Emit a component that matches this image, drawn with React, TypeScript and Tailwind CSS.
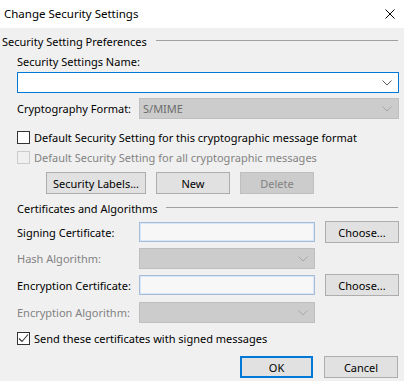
import type { ReactNode } from "react";

const font = { fontFamily: '"Noto Sans", "Open Sans", sans-serif' };

function Chevron({ color }: { color: string }) {
  return (
    <svg width="10" height="6" viewBox="0 0 10 6" className="shrink-0">
      <path d="M0.5 0.5 L5 5 L9.5 0.5" fill="none" stroke={color} strokeWidth="1" />
    </svg>
  );
}

function Checkbox({ checked, disabled }: { checked?: boolean; disabled?: boolean }) {
  return (
    <span
      className={
        "flex h-[13px] w-[13px] shrink-0 items-center justify-center border " +
        (disabled ? "border-[#cccccc] bg-[#f0f0f0]" : "border-[#333333] bg-white")
      }
    >
      {checked && (
        <svg width="11" height="11" viewBox="0 0 11 11">
          <path d="M1 5.5 L4 8.5 L10 1.5" fill="none" stroke="#333333" strokeWidth="1.1" />
        </svg>
      )}
    </span>
  );
}

function Button({
  children,
  w,
  disabled,
  primary,
}: {
  children: ReactNode;
  w: string;
  disabled?: boolean;
  primary?: boolean;
}) {
  let cls = "flex h-[22px] shrink-0 items-center justify-center whitespace-nowrap border ";
  if (disabled) cls += "border-[#bfbfbf] bg-[#cccccc] text-[#838383] ";
  else if (primary) cls += "border-2 border-[#0078d7] bg-[#e1e1e1] ";
  else cls += "border-[#adadad] bg-[#e1e1e1] ";
  return <div className={cls + w}>{children}</div>;
}

function DisabledCombo({ w, text }: { w: string; text?: string }) {
  return (
    <div
      className={
        "flex h-[21px] items-center justify-between border border-[#bfbfbf] bg-[#cccccc] pl-[3px] pr-[6px] text-[#6d6d6d] " +
        w
      }
    >
      <span>{text}</span>
      <Chevron color="#a6a6a6" />
    </div>
  );
}

function CertBox() {
  return (
    <div className="h-[20px] w-[176px] shrink-0 border border-[#a9bcd5] bg-[#f7f7f7] shadow-[inset_0_0_0_1px_#d6e7f8]" />
  );
}

function Heading({ text, indent }: { text: string; indent: string }) {
  return (
    <div className={"flex h-[16px] items-center pr-[6px] " + indent}>
      <span className="shrink-0">{text}</span>
      <div className="ml-[9px] h-px flex-1 -translate-y-[1px] bg-[#a0a0a0]" />
    </div>
  );
}

function Label({ children, muted }: { children: ReactNode; muted?: boolean }) {
  return <span className={"w-[122px] shrink-0 " + (muted ? "text-[#838383]" : "")}>{children}</span>;
}

export default function App() {
  return (
    <div
      className="flex h-[381px] w-[404px] flex-col overflow-hidden whitespace-nowrap bg-[#f0f0f0] text-[11px] leading-none text-black"
      style={font}
    >
      {/* title bar */}
      <div className="flex h-[28px] shrink-0 items-center justify-between bg-white pl-[4px] pr-[9px]">
        <span className="text-[11.5px]">Change Security Settings</span>
        <svg width="10" height="10" viewBox="0 0 10 10">
          <path d="M0.5 0.5 L9.5 9.5 M9.5 0.5 L0.5 9.5" stroke="#000" strokeWidth="1" />
        </svg>
      </div>

      <div className="mt-[5px]">
        <Heading text="Security Setting Preferences" indent="pl-[2px]" />
      </div>

      <div className="pl-[17px] pr-[5px]">
        <div className="mt-[4px] flex h-[16px] items-center">Security Settings Name:</div>
        <div className="mt-[3px] flex h-[21px] items-center justify-end border border-[#0078d7] bg-white pr-[6px]">
          <Chevron color="#5a5a5a" />
        </div>

        <div className="mt-[5px] flex h-[21px] items-center">
          <Label>Cryptography Format:</Label>
          <DisabledCombo w="flex-1" text="S/MIME" />
        </div>

        <div className="mt-[10px] flex h-[16px] items-center gap-[4px]">
          <Checkbox />
          <span>Default Security Setting for this cryptographic message format</span>
        </div>
        <div className="mt-[4px] flex h-[16px] items-center gap-[4px] text-[#838383]">
          <Checkbox disabled />
          <span>Default Security Setting for all cryptographic messages</span>
        </div>

        <div className="mt-[7px] flex gap-[10px] pl-[29px]">
          <Button w="w-[100px]">Security Labels...</Button>
          <Button w="w-[74px]">New</Button>
          <Button w="w-[74px]" disabled>
            Delete
          </Button>
        </div>
      </div>

      <div className="mt-[6px]">
        <Heading text="Certificates and Algorithms" indent="pl-[17px]" />
      </div>

      <div className="pl-[17px] pr-[6px]">
        <div className="mt-[5px] flex h-[22px] items-center">
          <Label>Signing Certificate:</Label>
          <CertBox />
          <div className="ml-[10px]">
            <Button w="w-[74px]">Choose...</Button>
          </div>
        </div>

        <div className="mt-[5px] flex h-[21px] items-center">
          <Label muted>Hash Algorithm:</Label>
          <DisabledCombo w="w-[176px]" />
        </div>

        <div className="mt-[5px] flex h-[22px] items-center">
          <Label>Encryption Certificate:</Label>
          <CertBox />
          <div className="ml-[10px]">
            <Button w="w-[74px]">Choose...</Button>
          </div>
        </div>

        <div className="mt-[6px] flex h-[21px] items-center">
          <Label muted>Encryption Algorithm:</Label>
          <DisabledCombo w="w-[176px]" />
        </div>

        <div className="mt-[7px] flex h-[16px] items-center gap-[4px]">
          <Checkbox checked />
          <span>Send these certificates with signed messages</span>
        </div>

        <div className="mt-[10px] flex justify-end gap-[11px]">
          <Button w="w-[73px] h-[21px]" primary>
            OK
          </Button>
          <Button w="w-[74px] h-[21px]">Cancel</Button>
        </div>
      </div>
    </div>
  );
}
